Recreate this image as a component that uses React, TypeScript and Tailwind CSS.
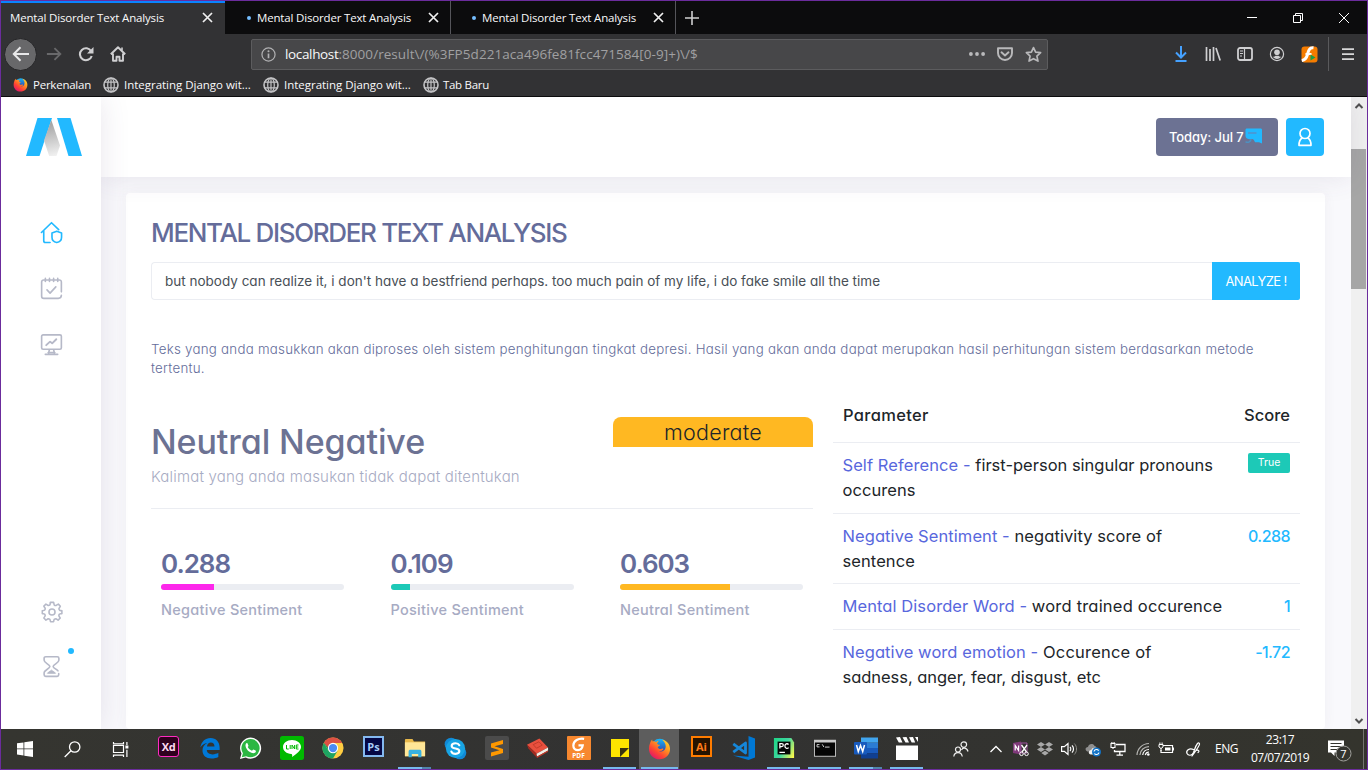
import React from "react";
import type { ReactNode } from "react";

type IconProps = { size?: number; className?: string; box?: string; children?: ReactNode };

function Svg({ size = 24, className = "", box = "0 0 24 24", children }: IconProps) {
  return (
    <svg width={size} height={size} viewBox={box} fill="none" className={`shrink-0 ${className}`}>
      {children}
    </svg>
  );
}

function Slot({ className = "", children }: { className?: string; children?: ReactNode }) {
  return <div className={`flex h-full shrink-0 items-center justify-center ${className}`}>{children}</div>;
}

/* ---------- browser chrome ---------- */

function CloseX() {
  return (
    <Svg size={11} box="0 0 11 11">
      <path d="M1 1l9 9M10 1l-9 9" stroke="#f0f0f0" strokeWidth="1.7" />
    </Svg>
  );
}

function Globe() {
  return (
    <Svg size={16} box="0 0 16 16">
      <g stroke="#c4c4c6" strokeWidth="1.2">
        <circle cx="8" cy="8" r="7" strokeWidth="1.6" />
        <ellipse cx="8" cy="8" rx="3.3" ry="7" />
        <path d="M8 1v14M1.5 5.2h13M1.5 10.8h13" />
      </g>
    </Svg>
  );
}

function Firefox({ size }: { size: number }) {
  return (
    <Svg size={size}>
      <defs>
        <linearGradient id="fx-body" x1="20" y1="2" x2="5" y2="22" gradientUnits="userSpaceOnUse">
          <stop offset="0" stopColor="#ffdf2e" />
          <stop offset=".35" stopColor="#ff9a1f" />
          <stop offset=".7" stopColor="#ff4433" />
          <stop offset="1" stopColor="#e0166b" />
        </linearGradient>
        <linearGradient id="fx-globe" x1="12" y1="2" x2="12" y2="18" gradientUnits="userSpaceOnUse">
          <stop offset="0" stopColor="#16b5f8" />
          <stop offset="1" stopColor="#352d9b" />
        </linearGradient>
      </defs>
      <circle cx="12.3" cy="10.6" r="8.8" fill="url(#fx-globe)" />
      <path
        d="M2.2 6.2C2.6 4.800 3.600 3.300 4.300 2.600c.1 1 .3 1.600.7 2.100 1.200-.3 2.500-.1 3.500.5.800-.8 2-1.200 3-1.200-1.300.9-1.900 2-1.900 3 .5 1 1.700 1.100 3 1.200-.1 1.300-1.900 1.500-2.500 2.500.8 1.800 2.500 2.300 4.200 1.500 1-.4 2-.2 1.900.4-1 1.800-3 2.500-4.800 2.300 3.600 1 7-1.500 7.100-5.100.1-3-1.800-5.300-3.800-7C19.500 3.300 22.900 7.500 23 12.300 23.100 18.500 18.200 23.300 12 23.300S1 18.300 1 12.200c0-2.300.4-4.200 1.200-6z"
        fill="url(#fx-body)"
      />
    </Svg>
  );
}

function Tab({ active = false, className = "" }: { active?: boolean; className?: string }) {
  return (
    <div
      className={`flex h-[33px] shrink-0 items-center text-[11.5px] tracking-[-0.17px] text-[#f9f9fa] ${
        active ? "border-t-2 border-[#0a84ff] bg-[#323234] pb-0.5" : "border-r border-[#55555a]"
      } ${className}`}
    >
      {!active && <span className="mr-[6px] size-[4px] shrink-0 rounded-full bg-[#75bfff]" />}
      <span className="w-[176px] whitespace-nowrap pt-px">Mental Disorder Text Analysis</span>
      <span className={active ? "ml-[16px]" : "-ml-[5px]"}>
        <CloseX />
      </span>
    </div>
  );
}

function TabStrip() {
  return (
    <div className="flex h-[33px] bg-[#0c0c0d]">
      <Tab active className="w-[224px] pl-[9px]" />
      <Tab className="w-[226px] pl-[22px]" />
      <Tab className="w-[225px] pl-[21px]" />
      <Slot className="w-[32px]">
        <Svg size={14} box="0 0 14 14">
          <path d="M7 0v14M0 7h14" stroke="#cfcfd0" strokeWidth="1.6" />
        </Svg>
      </Slot>
      <div className="flex-1" />
      <Slot className="w-[46px]">
        <Svg size={10} box="0 0 10 10">
          <path d="M0 4.500h10" stroke="#fff" />
        </Svg>
      </Slot>
      <Slot className="w-[46px]">
        <Svg size={10} box="0 0 10 10">
          <path d="M.5 2.500h7v7h-7zM2.500 2.500v-2h7v7h-2" stroke="#fff" />
        </Svg>
      </Slot>
      <Slot className="w-[46px]">
        <Svg size={10} box="0 0 10 10">
          <path d="M0 0l10 10M10 0L0 10" stroke="#fff" strokeWidth="1" />
        </Svg>
      </Slot>
    </div>
  );
}

function Toolbar() {
  return (
    <div className="flex h-[40px] items-center bg-[#323234]">
      <div className="ml-[3px] flex size-[33px] shrink-0 items-center justify-center rounded-full border border-[#252527] bg-[#68686a]">
        <Svg size={18} box="0 0 18 18">
          <path d="M17 9H2M8.500 2.300L1.800 9l6.700 6.700" stroke="#e8e8e9" strokeWidth="2" />
        </Svg>
      </div>
      <Slot className="w-[32px] pl-[1px]">
        <Svg size={16} box="0 0 18 18">
          <path d="M1 9h15M9.500 2.300L16.200 9l-6.700 6.700" stroke="#69696b" strokeWidth="2" />
        </Svg>
      </Slot>
      <Slot className="w-[33px]">
        <Svg size={16} box="0 0 16 16">
          <path d="M13.200 5.300A6 6 0 1 0 13.700 10" stroke="#cfcfd1" strokeWidth="2.100" />
          <path d="M15.500 1v6.500H9z" fill="#cfcfd1" />
        </Svg>
      </Slot>
      <Slot className="w-[31px]">
        <Svg size={16} box="0 0 16 16">
          <path d="M.8 8.300L8 1.300l7.200 7M3 7.500v7.300h3.500v-4h3v4H13V7.500" stroke="#cfcfd1" strokeWidth="1.900" strokeLinejoin="round" />
          <path d="M12 1.500v3" stroke="#cfcfd1" strokeWidth="1.600" />
        </Svg>
      </Slot>
      <div className="ml-[118px] flex h-[31px] w-[797px] shrink-0 items-center rounded-[2px] border border-[#5c5c5e] bg-[#474749]">
        <Slot className="w-[33px]">
          <Svg size={15} box="0 0 16 16">
            <circle cx="8" cy="8" r="7" stroke="#b1b1b3" strokeWidth="1.300" />
            <path d="M8 7v5" stroke="#b1b1b3" strokeWidth="1.800" />
            <circle cx="8" cy="4.500" r="1.100" fill="#b1b1b3" />
          </Svg>
        </Slot>
        <span className="pt-px whitespace-nowrap text-[13.500px] text-[#a0a0a2]">
          <span className="tracking-[-0.35px] text-[#f9f9fa]">localhost</span>
          <span className="tracking-[0.06px]">:8000/result\/(%3FP5d221aca496fe81fcc471584[0-9]+)\/$</span>
        </span>
        <div className="flex-1" />
        <Slot className="w-[28px]">
          <Svg size={16} box="0 0 16 16">
            <g fill="#b9b9bb">
              <circle cx="1.900" cy="8" r="1.900" />
              <circle cx="8" cy="8" r="1.900" />
              <circle cx="14.100" cy="8" r="1.900" />
            </g>
          </Svg>
        </Slot>
        <Slot className="w-[28px]">
          <Svg size={16} box="0 0 16 16">
            <path d="M1 2.200h14v4.800a7 7 0 0 1-14 0z" stroke="#b9b9bb" strokeWidth="1.900" strokeLinejoin="round" />
            <path d="M4.500 6.300L8 9.500l3.500-3.200" stroke="#b9b9bb" strokeWidth="1.900" strokeLinecap="round" strokeLinejoin="round" />
          </Svg>
        </Slot>
        <Slot className="w-[28px]">
          <Svg size={17} box="0 0 16 16">
            <path d="M8 1.500l2 4.300 4.700.5-3.500 3.200 1 4.700L8 11.900l-4.200 2.300 1-4.700L1.300 6.300 6 5.800z" stroke="#b9b9bb" strokeWidth="1.600" strokeLinejoin="round" />
          </Svg>
        </Slot>
      </div>
      <div className="flex-1" />
      <Slot className="w-[32px]">
        <Svg size={16} box="0 0 16 16">
          <path d="M8 0v11M3 6.500l5 5 5-5M2.500 14.900h11" stroke="#45a1ff" strokeWidth="2" />
        </Svg>
      </Slot>
      <Slot className="w-[32px]">
        <Svg size={16} box="0 0 16 16">
          <path d="M1.500 1v14M5 3v12M8.500 1v14M11 2l4.200 12.500" stroke="#cfcfd1" strokeWidth="1.700" />
        </Svg>
      </Slot>
      <Slot className="w-[32px]">
        <Svg size={16} box="0 0 16 16">
          <rect x="1" y="2" width="14" height="12" rx="2" stroke="#cfcfd1" strokeWidth="1.800" />
          <path d="M7.500 2v12M3 5h3M3 7.500h3M3 10h2" stroke="#cfcfd1" strokeWidth="1.200" />
        </Svg>
      </Slot>
      <Slot className="w-[32px]">
        <Svg size={16} box="0 0 16 16">
          <circle cx="8" cy="8" r="6.600" stroke="#cfcfd1" strokeWidth="1.200" />
          <circle cx="8" cy="6.200" r="2.800" fill="#cfcfd1" />
          <path d="M3.700 10.500c1 .8 2 .2 2.800-.7h3c.8.900 1.800 1.500 2.800.7a5 5 0 0 1-8.600 0z" fill="#cfcfd1" />
        </Svg>
      </Slot>
      <Slot className="w-[32px]">
        <Svg size={17} box="0 0 17 17">
          <rect x=".5" y=".5" width="16" height="16" rx="3" fill="#f57c00" />
          <path d="M12.500 1.800C8 1.300 7.500 5 6.500 8.500 5.600 11.800 4 14 .8 14.500" stroke="#fff" strokeWidth="3" />
          <path d="M4.500 8h6" stroke="#fff" strokeWidth="2" />
          <path d="M9.500 8.500l5 3-5 3z" fill="#18a048" />
        </Svg>
      </Slot>
      <div className="ml-[3px] h-[34px] w-px bg-[#5a5a5c]" />
      <Slot className="w-[38px]">
        <Svg size={14} box="0 0 14 14">
          <path d="M1 2.100h12M1 7.100h12M1 12.100h12" stroke="#d7d7d8" strokeWidth="1.900" />
        </Svg>
      </Slot>
    </div>
  );
}

function Bookmarks() {
  const text = "whitespace-nowrap pl-[5px]";
  return (
    <div className="flex h-[22px] items-center bg-[#323234] pb-px text-[11.500px] text-[#f9f9fa]">
      <div className="flex w-[101px] items-center pl-3">
        <Firefox size={15} />
        <span className={`${text} tracking-[-0.24px]`}>Perkenalan</span>
      </div>
      <div className="flex w-[160px] items-center pl-px">
        <Globe />
        <span className={`${text} tracking-[-0.02px]`}>Integrating Django wit...</span>
      </div>
      <div className="flex w-[160px] items-center pl-px">
        <Globe />
        <span className={`${text} tracking-[-0.02px]`}>Integrating Django wit...</span>
      </div>
      <div className="flex items-center pl-px">
        <Globe />
        <span className="pl-1 whitespace-nowrap tracking-[-0.3px]">Tab Baru</span>
      </div>
    </div>
  );
}

/* ---------- dashboard ---------- */

function Sidebar() {
  const stroke = { strokeWidth: 1.700, strokeLinecap: "round" as const, strokeLinejoin: "round" as const };
  return (
    <aside className="relative z-20 flex w-[100px] shrink-0 flex-col items-center bg-white shadow-[0_0_28px_0_rgba(82,63,105,0.13)]">
      <svg width="56" height="38" viewBox="0 0 56 38" className="mt-[21px] ml-[6px] shrink-0">
        <defs>
          <linearGradient id="fold" x1="22" y1="6" x2="30" y2="38" gradientUnits="userSpaceOnUse">
            <stop offset="0" stopColor="#a5a5a5" />
            <stop offset="1" stopColor="#f2f2f2" />
          </linearGradient>
        </defs>
        <path d="M11.500 0H26L13.500 38H0z" fill="#22b9ff" />
        <path d="M25.300 2L34 27.500 30.500 38h-7.300L18 22.500z" fill="url(#fold)" />
        <path d="M31 0h13.500L56 38H42.500z" fill="#22b9ff" />
      </svg>

      <Svg size={23} className="mt-[65px] ml-px">
        <g stroke="#22b9ff" {...stroke}>
          <path d="M1.500 12L12 1.800 19.500 9M3.900 9.800V20.500c0 1.200.8 1.900 1.900 1.900H10.500" />
          <path d="M17.500 10.800l5 1.800v4.300c0 3.200-2 5-5 5.600-3-.6-5-2.400-5-5.600v-4.300z" />
        </g>
      </Svg>
      <Svg size={23} className="mt-[33px] ml-px">
        <g stroke="#b6b9c8" {...stroke}>
          <path d="M22.300 15.500V5.300c0-1.500-.7-2.200-2.200-2.200H3.900c-1.500 0-2.200.7-2.200 2.200v14.800c0 1.500.7 2.200 2.200 2.200h15.200c1.800 0 3.100-1 3.200-3.200M5.600 1.500v3.200M9.900 1.500v3.200M14.200 1.500v3.200M18.500 1.500v3.200M7.300 13.500l3.200 3.300 6-6.500" />
        </g>
      </Svg>
      <Svg size={23} className="mt-[33px] ml-px">
        <g stroke="#b6b9c8" {...stroke}>
          <rect x="1.700" y="2" width="20.600" height="15" rx="1.500" />
          <path d="M9.800 17.500l-.9 3.700M14.200 17.500l.9 3.700M5.500 22.300h13M8.500 20.300h7" />
          <path d="M6.500 12.700l4-3.700 2.200 1.800L17 6.500" strokeWidth="2" />
        </g>
      </Svg>
      <Svg size={22} className="mt-[245px] ml-px">
        <g stroke="#b6b9c8" {...stroke}>
          <circle cx="12" cy="12" r="3.300" />
          <path d="M10.200 1.500h3.600c.3 1 .2 2 .7 2.900.6.5 1.300.6 1.900.5.900-.4 1.600-1 2.500-1.500l2.200 2.400c-.4 1-1.200 1.600-1.500 2.500-.1.800.2 1.400.7 1.800.8.500 1.700.3 2.500.6v2.900c-.8.500-1.800.3-2.600.7-.5.500-.8 1.100-.7 1.800.3 1 1 1.600 1.500 2.500l-2.300 2.300c-1-.4-1.600-1.200-2.500-1.500-.7 0-1.300.3-1.800.7-.5.800-.3 1.700-.7 2.500h-3.300c-.4-.8-.2-1.800-.7-2.600-.5-.4-1.100-.7-1.800-.6-.9.300-1.600 1-2.500 1.500l-2.300-2.300c.4-1 1.200-1.600 1.500-2.500 0-.7-.2-1.300-.7-1.800-.8-.5-1.700-.2-2.500-.6v-3.100c.8-.4 1.800-.2 2.500-.7.500-.4.700-1 .7-1.700-.3-1-1.100-1.600-1.500-2.600l2.300-2.200c1 .4 1.600 1.100 2.500 1.500.7.100 1.300-.2 1.800-.6.400-.8.200-1.800.5-2.700z" />
        </g>
      </Svg>
      <div className="relative mt-[32px] ml-px">
        <Svg size={23}>
          <g stroke="#b6b9c8" {...stroke}>
            <path d="M19.500 19.500v1.100c0 1-.6 1.700-1.600 1.700H6c-1 0-1.700-.7-1.700-1.700v-2c0-3 6-4.300 6-6.600S4.300 8.500 4.300 5.500v-2c0-1 .7-1.700 1.700-1.700h12c1 0 1.700.7 1.700 1.700v2c0 3-6 4.200-6 6.500 0 1.700 3.300 2.600 5 4.500" />
            <path d="M8 18.800c1-1.500 2.500-1.700 4-3 1.500 1.300 3 1.500 4 3z" fill="#b6b9c8" strokeWidth="1" />
          </g>
        </Svg>
        <span className="absolute -top-[7px] left-[28px] size-[6px] rounded-full bg-[#22b9ff]" />
      </div>
    </aside>
  );
}

function Header() {
  return (
    <header className="relative z-10 flex h-[80px] shrink-0 justify-end bg-white pt-[21px] pr-[27px] shadow-[0_0_28px_0_rgba(82,63,105,0.12)]">
      <div className="flex h-[38px] w-[122px] items-center rounded bg-[#6c7293] pl-[13px] text-[13px] font-medium tracking-[-0.1px] text-white">
        <span className="w-[75px] pt-0.5 whitespace-nowrap">Today: Jul 7</span>
        <Svg size={19} box="0 0 19 19" className="-mt-px">
          <path d="M3 1.500h13.500c1 0 1.500.5 1.500 1.500V16.500l-3-1.200h-4c-.7-2-1.500-3-3-3.300-1.500 0-3 .5-5-.5-1-.6-1.500-1.500-1.500-3V3c0-1 .5-1.500 1.500-1.500z" fill="#22b9ff" />
          <path d="M4 6h8.500" stroke="#5a8cc4" strokeWidth="1.300" />
          <path d="M2 15c2.500 1 4.500-.5 5-2.500" stroke="#3aa5e0" strokeWidth="1.500" strokeLinecap="round" opacity=".6" />
        </Svg>
      </div>
      <div className="ml-2 flex size-[38px] items-center justify-center rounded bg-[#22b9ff]">
        <Svg size={20} box="0 0 20 20">
          <circle cx="10" cy="6.500" r="5" stroke="#fff" strokeWidth="1.700" />
          <path d="M7.200 11c-2.200 1.200-3.200 3.500-3.200 7.300h12c0-3.800-1-6.100-3.200-7.300" stroke="#fff" strokeWidth="1.700" strokeLinejoin="round" />
        </Svg>
      </div>
    </header>
  );
}

const stats = [
  { value: "0.288", label: "Negative Sentiment", pct: 28.800, color: "bg-[#fd27eb]" },
  { value: "0.109", label: "Positive Sentiment", pct: 10.900, color: "bg-[#1dc9b7]" },
  { value: "0.603", label: "Neutral Sentiment", pct: 60.300, color: "bg-[#ffb822]" },
];

function Sentiment() {
  return (
    <section className="w-[662px] shrink-0 pt-[38px]">
      <div className="flex h-[92px] justify-between border-b border-[#ebedf2]">
        <div>
          <h2 className="text-[34px] leading-[49px] font-medium tracking-[-0.1px] text-[#6c7293]">Neutral Negative</h2>
          <p className="mt-px text-[15px] leading-5 font-light tracking-[0.19px] text-[#a7abc3]">
            Kalimat yang anda masukan tidak dapat ditentukan
          </p>
        </div>
        <div className="h-[30px] w-[200px] rounded-t-[8px] bg-[#ffb822] text-center text-[21.500px] leading-[30px] font-light tracking-[0.250px] text-[#212529]">
          moderate
        </div>
      </div>
      <div className="mt-[39px] grid grid-cols-3 gap-x-[46.500px] px-[10px]">
        {stats.map((s) => (
          <div key={s.label}>
            <div className="text-[26px] leading-[31px] font-semibold tracking-[-1.040px] text-[#646c9a]">{s.value}</div>
            <div className="mt-[5px] h-[6px] overflow-hidden rounded-[3px] bg-[#ebedf2]">
              <div className={`h-full ${s.color}`} style={{ width: `${s.pct}%` }} />
            </div>
            <div className="mt-[10px] text-[14.500px] leading-5 font-medium tracking-[0.270px] whitespace-nowrap text-[#a7abc3]">{s.label}</div>
          </div>
        ))}
      </div>
    </section>
  );
}

function Row({ className, name, score, children }: { className: string; name: string; score: ReactNode; children: ReactNode }) {
  return (
    <div className={`flex justify-between border-t border-[#ebedf2] pr-[10px] pl-[9.500px] pt-[10px] leading-[25px] ${className}`}>
      <div className="whitespace-nowrap">
        <span className="text-[#5867dd]">{name} - </span>
        {children}
      </div>
      {score}
    </div>
  );
}

function Score({ children }: { children: ReactNode }) {
  return <span className="text-[16px] font-medium tracking-[-0.550px] text-[#22b9ff]">{children}</span>;
}

function Parameters() {
  return (
    <section className="ml-5 w-[467px] pt-3 text-[16.500px] tracking-[0.080px] text-[#212529]">
      <div className="flex h-[51px] items-center justify-between px-[10px] pb-0.5 font-medium">
        <span className="tracking-[0.330px]">Parameter</span>
        <span className="tracking-[0.020px]">Score</span>
      </div>
      <Row
        className="h-[71px]"
        name="Self Reference"
        score={
          <span className="h-5 w-[42px] rounded-[2px] bg-[#1dc9b7] text-center text-[10.500px] leading-[19px] tracking-[0.050px] text-white">True</span>
        }
      >
        <span className="tracking-[0px]">first-person singular pronouns</span>
        <br />
        occurens
      </Row>
      <Row className="h-[70px]" name="Negative Sentiment" score={<Score>0.288</Score>}>
        negativity score of
        <br />
        sentence
      </Row>
      <Row className="h-[46px]" name="Mental Disorder Word" score={<Score>1</Score>}>
        <span className="tracking-[0.200px]">word trained occurence</span>
      </Row>
      <Row className="h-[71px]" name="Negative word emotion" score={<Score>-1.72</Score>}>
        <span className="tracking-[0.200px]">Occurence of</span>
        <br />
        <span className="tracking-[-0.040px]">sadness, anger, fear, disgust, etc</span>
      </Row>
    </section>
  );
}

function Scrollbar() {
  return (
    <div className="flex w-[16px] shrink-0 flex-col items-center bg-[#f0f0f0]">
      <Svg size={10} box="0 0 10 10" className="mt-[4px]">
        <path d="M1.500 7L5 3.500 8.500 7" stroke="#505050" strokeWidth="2" />
      </Svg>
      <div className="mt-[38px] h-[140px] w-[15px] self-start bg-[#a6a6a6]" />
      <div className="flex-1" />
      <Svg size={10} box="0 0 10 10" className="mb-[3px]">
        <path d="M1.500 3L5 6.500 8.500 3" stroke="#505050" strokeWidth="2" />
      </Svg>
    </div>
  );
}

function Dashboard() {
  return (
    <div className="flex h-[632px] overflow-hidden bg-[#f9f9fc] font-['Inter',sans-serif] [font-feature-settings:'cv11']">
      <Sidebar />
      <div className="flex min-w-0 flex-1 flex-col">
        <Header />
        <main className="mt-4 mr-[26px] ml-[25px] flex-1 rounded bg-white px-[25px] pt-[25px] shadow-[0_0_13px_0_rgba(82,63,105,0.05)]">
          <h1 className="text-[26px] leading-[30px] font-medium tracking-[-1.330px] whitespace-nowrap text-[#646c9a]">
            MENTAL DISORDER TEXT ANALYSIS
          </h1>
          <div className="mt-[14px] flex h-[38px] text-[13px]">
            <div className="flex flex-1 items-center rounded-l border border-r-0 border-[#ebedf2] pt-px pl-[13px] text-[13.500px] tracking-[0.004px] whitespace-nowrap text-[#495057]">
              but nobody can realize it, i don't have a bestfriend perhaps. too much pain of my life, i do fake smile all the time
            </div>
            <div className="flex w-[88px] items-center justify-center rounded-r-[2px] bg-[#22b9ff] pt-0.5 tracking-[-0.650px] text-white">ANALYZE !</div>
          </div>
          <p className="mt-10 text-[13.300px] leading-[19px] font-light tracking-[0.257px] whitespace-nowrap text-[#646c9a]">
            Teks yang anda masukkan akan diproses oleh sistem penghitungan tingkat depresi. Hasil yang akan anda dapat merupakan
            hasil perhitungan sistem berdasarkan metode
            <br />
            tertentu.
          </p>
          <div className="mt-px flex">
            <Sentiment />
            <Parameters />
          </div>
        </main>
      </div>
      <Scrollbar />
    </div>
  );
}

/* ---------- taskbar ---------- */

function App41({ state = "", children }: { state?: "" | "running" | "grouped" | "active"; children: ReactNode }) {
  return (
    <div
      className={`flex h-[40px] shrink-0 flex-col items-center ${
        state === "active" ? "-ml-px mr-[2px] w-[40px] bg-[#5d5d5d]" : "w-[41px]"
      }`}
    >
      <div className="flex h-[38px] items-center">{children}</div>
      {state === "grouped" && (
        <div className="flex h-[2px] w-[33px]">
          <div className="w-[24px] bg-[#76b9ed]" />
          <div className="flex-1 bg-[#5083ab]" />
        </div>
      )}
      {state === "running" && <div className="h-[2px] w-[33px] bg-[#76b9ed]" />}
      {state === "active" && <div className="h-[2px] w-[37px] bg-[#76b9ed]" />}
    </div>
  );
}

function LetterTile({ className, children }: { className: string; children: ReactNode }) {
  return (
    <div className={`flex size-[21px] items-center justify-center font-['Open_Sans',sans-serif] text-[11px] leading-none font-bold ${className}`}>
      {children}
    </div>
  );
}

function Apps() {
  return (
    <div className="flex">
      <App41>
        <LetterTile className="-mt-[3px] rounded-[3px] border border-[#ff2bc2] bg-[#2e001e] tracking-tight text-[#ffd9f2]">Xd</LetterTile>
      </App41>
      <App41>
        <Svg size={22}>
          <path
            d="M1.500 11.500C2.500 4.800 6.800 1 12.500 1 18.800 1 22.500 5.600 22.500 11.500v2.800H8.500c.2 3.300 3 4.700 6.300 4.700 2.400 0 4.700-.7 6.300-1.700v4.500c-1.900 1-4.500 1.700-7.500 1.700-5.800 0-9.800-3.200-9.800-8.700 0-3.700 2-6.600 5.300-8.200C5.500 7 3.200 8.800 1.500 11.500zM8.700 10.300h8.200c0-2.700-1.600-4.300-3.900-4.300-2.200 0-4 1.600-4.300 4.300z"
            fill="#0078d7"
          />
        </Svg>
      </App41>
      <App41>
        <Svg size={23}>
          <path d="M1 23l1.600-5.800A11 11 0 1 1 7 21.400z" fill="#fff" />
          <path d="M2.900 21.200l1.200-4.300A9.500 9.500 0 1 1 7.500 20z" fill="#2cb742" />
          <path d="M7.200 7c.4-.7 1.400-.9 1.700-.2l1 2.200c.1.500-.6 1-.8 1.500 1 1.900 2.400 3.100 4.400 3.900.6-.3 1-1.400 1.600-1.300l2.200 1c.7.5.1 1.900-.7 2.400-1.600.9-3.700.3-5.700-1C8.400 13.800 5.700 10 7.200 7z" fill="#fff" />
        </Svg>
      </App41>
      <App41>
        <Svg size={24}>
          <rect width="24" height="24" rx="2.500" fill="#00b900" />
          <path d="M12 4c5 0 9 3 9 7 0 3.500-4 6.500-9 10 .5-1.800.3-2.600-.7-2.900C6.500 17.600 3 14.800 3 11c0-4 4-7 9-7z" fill="#fff" />
          <path d="M6.500 9v4h2.200M10.200 9v4M12 13V9l2.600 4V9M18.500 9h-2.200v4h2.200M16.300 11h2" stroke="#00b900" strokeWidth="1" />
        </Svg>
      </App41>
      <App41>
        <Svg size={22}>
          <circle cx="12" cy="12" r="11.500" fill="#ffcd42" />
          <path d="M2.040 6.250A11.500 11.500 0 0 0 12 23.500L17 14.900 7 14.900z" fill="#1da462" />
          <path d="M2.040 6.250L7 14.900 12 12V6.500z" fill="#1da462" />
          <path d="M2.040 6.250A11.500 11.500 0 0 1 21.960 6.500H12L7 12z" fill="#dd5144" />
          <circle cx="12" cy="12" r="5.600" fill="#fff" />
          <circle cx="12" cy="12" r="4.500" fill="#4c8bf5" />
        </Svg>
      </App41>
      <App41>
        <LetterTile className="-mt-[3px] border-2 border-[#84b9f0] bg-[#050744] text-[#a9cdf8]">Ps</LetterTile>
      </App41>
      <App41 state="grouped">
        <Svg size={22}>
          <path d="M1 3.500c0-.8.500-1.300 1.300-1.300h7l1.500 2.600H23V21H1z" fill="#e8b84a" />
          <path d="M1 5.800h22V21H1z" fill="#ffe697" />
          <path d="M5 22v-6c0-1.300.8-2 2-2h10c1.200 0 2 .7 2 2v6h-3.500v-3.500h-7V22z" fill="#38b1e0" />
        </Svg>
      </App41>
      <App41>
        <Svg size={23}>
          <circle cx="7.500" cy="7.500" r="6.800" fill="#1089d6" />
          <circle cx="16.500" cy="16.500" r="6.800" fill="#1089d6" />
          <circle cx="12" cy="12" r="10" fill="#18a4e4" />
          <path d="M16 8.600C15.300 7.200 13.800 6.500 12 6.500c-2.300 0-4 1-4 2.800 0 3.800 8 1.700 8 5.400 0 1.800-1.700 2.900-4 2.900-2.200 0-3.700-.9-4.300-2.400" stroke="#fff" strokeWidth="2.200" strokeLinecap="round" />
        </Svg>
      </App41>
      <App41>
        <Svg size={24}>
          <rect width="24" height="24" rx="2" fill="#4b4b4b" />
          <path d="M6 7.500L18 4v4L9.500 10.300 18 13v4L6 20.500v-4l8.500-2.200L6 11.500z" fill="#ff9800" />
        </Svg>
      </App41>
      <App41>
        <Svg size={23}>
          <path d="M1 8l13-6.500 9 9.500-12 6.500z" fill="#e9503e" />
          <path d="M1 8l10 9.500v4L2.500 12z" fill="#a52a20" />
          <path d="M11 17.500L23 11v3L11.500 20.500z" fill="#f3eee6" />
          <path d="M11 20.500L23 14v1.500L11.500 22z" fill="#c23526" />
          <path d="M7.500 8l6-3 3.500 3.500-6 3.200z" stroke="#b93425" strokeWidth=".8" />
        </Svg>
      </App41>
      <App41>
        <div className="flex h-6 w-6 shrink-0 flex-col items-center justify-end rounded-[1px] bg-[#f7882f] font-['Open_Sans',sans-serif] font-bold text-white">
          <Svg size={15} box="0 0 16 16">
            <path d="M14 2C8 1 2.500 4 2.500 9c0 3 2 5 5 5 2.700 0 4.500-2 5-5H8" stroke="#fff" strokeWidth="2.400" />
          </Svg>
          <span className="text-[6.500px] leading-[8px]">PDF</span>
        </div>
      </App41>
      <App41 state="running">
        <Svg size={18} box="0 0 18 18">
          <path d="M0 0h18v9H9v9H0z" fill="#fee500" />
          <path d="M9 9h9l-9 9z" fill="#3a3410" />
          <path d="M18 9v9H9z" fill="#fee500" />
        </Svg>
      </App41>
      <App41 state="active">
        <Firefox size={23} />
      </App41>
      <App41>
        <LetterTile className="-mt-[3px] border-2 border-[#ff7c00] bg-[#261300] text-[#ff7c1a]">Ai</LetterTile>
      </App41>
      <App41>
        <Svg size={24}>
          <path d="M17.500 0L24 2.500v19L17.500 24 2 19.500l15.500 1.200z" fill="#0078d4" />
          <path d="M2.300 7.800L14.500 17V7L2.300 16.200" stroke="#1687d9" strokeWidth="2.800" strokeLinejoin="round" />
        </Svg>
      </App41>
      <App41 state="running">
        <Svg size={22}>
          <defs>
            <linearGradient id="pc" x1="0" y1="6" x2="24" y2="18" gradientUnits="userSpaceOnUse">
              <stop offset="0" stopColor="#21d789" />
              <stop offset=".5" stopColor="#3fd6a0" />
              <stop offset="1" stopColor="#fcf84a" />
            </linearGradient>
          </defs>
          <path d="M1 1h19l3 5v17H1z" fill="url(#pc)" />
          <path d="M5 5h14v14H5z" fill="#050505" />
          <path d="M7.500 12.500V7.200h2c2.300 0 2.300 3.300 0 3.300h-2M17 8.200c-1.500-1.600-4-.8-4 1.700s2.500 3.300 4 1.700M7 16.800h6" stroke="#fff" strokeWidth="1.400" />
        </Svg>
      </App41>
      <App41 state="running">
        <Svg size={22}>
          <path d="M0 3h24v18.500H0z" fill="#c9c9c9" />
          <path d="M1 6h22v14.500H1z" fill="#050505" />
          <path d="M6 8.300H3.300v2.500H6M7.500 8.600v.1M7.500 10.600v.1M9 8l1.800 3M12 11h5" stroke="#ddd" strokeWidth="1" />
        </Svg>
      </App41>
      <App41 state="grouped">
        <Svg size={24}>
          <path d="M7 1.500h17v5.200H7z" fill="#41a5ee" />
          <path d="M7 6.700h17V12H7z" fill="#2b7cd3" />
          <path d="M7 12h17v5.200H7z" fill="#185abd" />
          <path d="M7 17.200h17v5.300H7z" fill="#103f91" />
          <rect y="6" width="13" height="12.500" rx="1" fill="#185abd" />
          <path d="M2.500 9l1.800 6.500L6.500 9.500l2.200 6L10.500 9" stroke="#fff" strokeWidth="1.500" />
        </Svg>
      </App41>
      <App41 state="running">
        <Svg size={24}>
          <path d="M1 9.500h22V24H1zM1 1.500l4-.5 2.500 5.500H3.800zM7.500 1.300l4-.3L14 6.500h-3.500zM14 1.200l4-.2 2.200 5.500h-3.500zM20 1h3v5z" fill="#fff" />
        </Svg>
      </App41>
    </div>
  );
}

function Tray() {
  return (
    <div className="flex h-full text-[12px] text-white">
      <Slot className="w-[39px]">
        <Svg size={16} box="0 0 16 16">
          <g stroke="#f0f0f0" strokeWidth="1.200">
            <circle cx="10.800" cy="3.600" r="2.800" />
            <path d="M8.500 9c1.200-2.800 5.500-2.500 6.500 1.500" />
            <circle cx="5" cy="8.500" r="2.500" />
            <path d="M.8 15.500c.5-5 7.500-5.500 8.500 0" />
          </g>
        </Svg>
      </Slot>
      <Slot className="w-[32px]">
        <Svg size={12} box="0 0 12 12">
          <path d="M.5 9L6 3.500 11.500 9" stroke="#fff" strokeWidth="1.300" />
        </Svg>
      </Slot>
      <Slot className="w-[18px]">
        <Svg size={16} box="0 0 16 16">
          <path d="M0 2l8-1.500v13L0 12z" fill="#80397b" />
          <path d="M8 2h6v10H8z" stroke="#a054a0" />
          <path d="M2.200 9.500v-5l3.400 5v-5" stroke="#fff" strokeWidth="1.200" />
          <path d="M8.500 4l5 7M14 4L9 11" stroke="#fff" strokeWidth="1.300" />
          <circle cx="8.500" cy="12.800" r="1.800" stroke="#fff" />
          <circle cx="13.500" cy="12.800" r="1.800" stroke="#fff" />
        </Svg>
      </Slot>
      <Slot className="w-[30px]">
        <Svg size={16} box="0 0 16 16">
          <path d="M4 1l4 2.500L4 6 0 3.500zM12 1l4 2.500L12 6 8 3.500zM4 6l4 2.500L4 11 0 8.500zM12 6l4 2.500-4 2.500-4-2.500zM8 9.800l3.700 2.300L8 14.500l-3.700-2.400z" fill="#a8a8a8" />
        </Svg>
      </Slot>
      <Slot className="w-[17px]">
        <Svg size={16} box="0 0 16 16">
          <path d="M.6 5.700h2.700L7 2.500v11L3.300 10.300H.6z" stroke="#fff" strokeWidth="1.200" />
          <path d="M9 6c1 1 1 3 0 4M11 4.300c2 2 2 5.400 0 7.400" stroke="#fff" strokeWidth="1.200" />
          <path d="M13.300 2.500c3 3 3 8 0 11" stroke="#8a8a86" />
        </Svg>
      </Slot>
      <Slot className="w-[32px]">
        <Svg size={16} box="0 0 16 16">
          <path d="M3.500 10.500C-.3 10.500-.3 6 3 6c.5-3.500 5.500-4 6.500-1 3 .2 3 5.500 0 5.500z" fill="#8f8f8f" />
          <path d="M6 13.500c-3 0-3-4.500.3-4.500.7-2.800 5-3 6 0 2.600 0 2.600 4.500 0 4.500z" fill="#f3f3f3" />
          <circle cx="11.500" cy="11" r="4.500" fill="#1273c7" />
          <path d="M9 10.500c.5-2.200 3.500-2.700 4.600-.8M14 11.700c-.6 2-3.500 2.500-4.600.8" stroke="#fff" strokeWidth="1.100" />
        </Svg>
      </Slot>
      <Slot className="w-[18px]">
        <Svg size={16} box="0 0 16 16">
          <path d="M6 3.500h9v7H4.500V9M9.800 10.500V14M6.500 14.200h6.500" stroke="#fff" strokeWidth="1.300" />
          <path d="M1 2.500h4v4H1zM3 6.500V8M1.900 2.500v-1.500M4.100 2.500V1" stroke="#fff" strokeWidth="1.100" />
        </Svg>
      </Slot>
      <Slot className="w-[31px]">
        <Svg size={14} box="0 0 14 14">
          <g strokeWidth="1.200">
            <path d="M1 13A12 12 0 0 1 13 1.500M3.900 13A9 9 0 0 1 13 4.600" stroke="#b5b5b2" />
            <path d="M6.700 13A6.300 6.300 0 0 1 13 7.500M9.300 13A3.800 3.800 0 0 1 13 10" stroke="#fff" />
          </g>
          <circle cx="12.300" cy="12.500" r="1.300" fill="#fff" />
        </Svg>
      </Slot>
      <Slot className="w-[16px]">
        <Svg size={16} box="0 0 16 16">
          <path d="M5 4.500h9.500v7H3V9M15.500 6.500v3" stroke="#fff" strokeWidth="1.200" />
          <path d="M7 6.500h5.500v3H7z" fill="#fff" />
          <path d="M1 3.500h4V6L3 7.500 1 6zM1.900 3.500v-2M4.100 3.500v-2M3 7v3" stroke="#fff" />
        </Svg>
      </Slot>
      <Slot className="w-[39px]">
        <Svg size={17} box="0 0 17 17">
          <path d="M8.500 8.500C4 6.500.8 10 2 12.500s5 2.500 6.500-1c1-2.500 1.800-6.500 4-9 1-1 2.300-.5 2 .8C13.800 6 9 12 7 15M11 9.500c2.500-1 4 .5 2 2" stroke="#fff" strokeWidth="1.200" strokeLinecap="round" />
        </Svg>
      </Slot>
      <Slot className="w-[27px]">
        <span className="tracking-[-0.400px]">ENG</span>
      </Slot>
      <div className="flex w-[80px] flex-col items-center pt-[2px] leading-[18px]">
        <span className="tracking-[-0.450px]">23:17</span>
        <span className="tracking-[-0.550px]">07/07/2019</span>
      </div>
      <Slot className="w-[41px]">
        <Svg size={26} box="0 0 26 26" className="-ml-[4px]">
          <path d="M2 4.500h16v12H8.500V20L5 16.500H2z" fill="#fff" />
          <path d="M4.500 7.500h11M4.500 10.500h11M4.500 13.500h7" stroke="#34342f" />
          <circle cx="17.500" cy="17.500" r="7.500" fill="#34342f" stroke="#a0a09c" />
          <text x="17.500" y="21.500" textAnchor="middle" fontSize="11" fontFamily="Open Sans" fill="#fff">7</text>
        </Svg>
      </Slot>
      <div className="ml-[2px] h-full w-px bg-[#73736f]" />
      <div className="w-[3px]" />
    </div>
  );
}

function Taskbar() {
  return (
    <div className="flex h-[40px] bg-linear-to-r from-[#353530] via-[#323232] to-[#34342d]">
      <Slot className="w-[48px]">
        <Svg size={16} box="0 0 16 16">
          <path d="M0 2.300l6.500-.9v6.100H0zM7.300 1.300L16 0v7.500H7.300zM0 8.300h6.500v6.100L0 13.500zM7.300 8.300H16V16l-8.700-1.300z" fill="#fff" />
        </Svg>
      </Slot>
      <Slot className="w-[47px]">
        <Svg size={17} box="0 0 17 17">
          <circle cx="10.700" cy="6" r="5.200" stroke="#fff" strokeWidth="1.300" />
          <path d="M7 9.700L.7 16" stroke="#fff" strokeWidth="1.300" />
        </Svg>
      </Slot>
      <Slot className="mr-[3px] w-[49px]">
        <Svg size={17} box="0 0 17 17">
          <path d="M1.500 4.500h10v7h-10zM1.500 1v1.800h10V1M1.500 16v-1.800h10V16M14.900 1v3M14.900 8.800V16" stroke="#fff" strokeWidth="1.200" />
          <path d="M13.400 4.500h3v3h-3z" fill="#fff" />
        </Svg>
      </Slot>
      <Apps />
      <div className="flex-1" />
      <Tray />
    </div>
  );
}

export default function App() {
  return (
    <div className="flex h-[770px] w-[1368px] flex-col overflow-hidden border border-[#6b2c9c] bg-[#0c0c0d] font-['Open_Sans',sans-serif]">
      <TabStrip />
      <Toolbar />
      <Bookmarks />
      <div className="h-px bg-[#0c0c0d]" />
      <Dashboard />
      <Taskbar />
    </div>
  );
}
